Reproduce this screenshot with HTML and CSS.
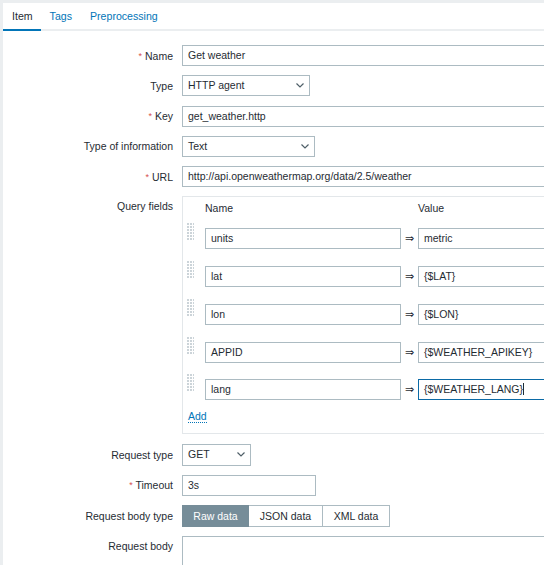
FILE: index.html
```html
<!doctype html>
<html lang="en">
  <head>
    <meta charset="UTF-8" />
    <title>Item</title>
    <link rel="stylesheet" href="styles.css">
  </head>
  <body>
    <div class="panel">
      <ul class="tabs">
        <li class="tab active">Item</li>
        <li class="tab">Tags</li>
        <li class="tab">Preprocessing</li>
      </ul>

      <div class="form">
        <label class="label"><span class="req">*</span> Name</label>
        <div class="field"><div class="input wide">Get weather</div></div>

        <label class="label">Type</label>
        <div class="field">
          <div class="select type-select">HTTP agent
            <svg class="chev" width="8" height="5" viewBox="0 0 8 5"><polyline points="0.5,0.5 4,4 7.5,0.5" /></svg>
          </div>
        </div>

        <label class="label"><span class="req">*</span> Key</label>
        <div class="field"><div class="input wide">get_weather.http</div></div>

        <label class="label">Type of information</label>
        <div class="field">
          <div class="select info-select">Text
            <svg class="chev" width="8" height="5" viewBox="0 0 8 5"><polyline points="0.5,0.5 4,4 7.5,0.5" /></svg>
          </div>
        </div>

        <label class="label"><span class="req">*</span> URL</label>
        <div class="field"><div class="input wide">http://api.openweathermap.org/data/2.5/weather</div></div>

        <label class="label label-top">Query fields</label>
        <div class="field">
          <div class="query-box">
            <div class="query-head">
              <span></span>
              <span>Name</span>
              <span></span>
              <span>Value</span>
            </div>
            <div class="query-row">
              <div class="drag"></div>
              <div class="input">units</div>
              <div class="arrow">&rArr;</div>
              <div class="input">metric</div>
            </div>
            <div class="query-row">
              <div class="drag"></div>
              <div class="input">lat</div>
              <div class="arrow">&rArr;</div>
              <div class="input">{$LAT}</div>
            </div>
            <div class="query-row">
              <div class="drag"></div>
              <div class="input">lon</div>
              <div class="arrow">&rArr;</div>
              <div class="input">{$LON}</div>
            </div>
            <div class="query-row">
              <div class="drag"></div>
              <div class="input">APPID</div>
              <div class="arrow">&rArr;</div>
              <div class="input">{$WEATHER_APIKEY}</div>
            </div>
            <div class="query-row">
              <div class="drag"></div>
              <div class="input">lang</div>
              <div class="arrow">&rArr;</div>
              <div class="input focused">{$WEATHER_LANG}<span class="caret"></span></div>
            </div>
            <a class="add-link">Add</a>
          </div>
        </div>

        <label class="label">Request type</label>
        <div class="field">
          <div class="select method-select">GET
            <svg class="chev" width="8" height="5" viewBox="0 0 8 5"><polyline points="0.5,0.5 4,4 7.5,0.5" /></svg>
          </div>
        </div>

        <label class="label"><span class="req">*</span> Timeout</label>
        <div class="field"><div class="input timeout">3s</div></div>

        <label class="label">Request body type</label>
        <div class="field">
          <div class="segmented">
            <span class="seg active">Raw data</span>
            <span class="seg">JSON data</span>
            <span class="seg">XML data</span>
          </div>
        </div>

        <label class="label label-top">Request body</label>
        <div class="field"><div class="textarea"></div></div>
      </div>
    </div>
  </body>
</html>
```

FILE: styles.css
```css
:root {
  --text-color: #1f2c33;
  --link-color: #0275b8;
  --border-color: #acbbc2;
  --soft-border: #e3e7ea;
  --bg-color: #ebeef0;
  --req-color: #d64e4e;
}

* {
  margin: 0;
  padding: 0;
  box-sizing: border-box;
}

body {
  width: 544px;
  height: 565px;
  overflow: hidden;
  background-color: var(--bg-color);
  font-family: 'Liberation Sans', Arial, sans-serif;
  font-size: 10.5px;
  color: var(--text-color);
}

.panel {
  margin: 3px 0 0 3px;
  width: 541px;
  height: 562px;
  overflow: hidden;
  background-color: #ffffff;
}

.tabs {
  display: flex;
  list-style: none;
  height: 28px;
  border-bottom: 2px solid var(--bg-color);
}

.tab {
  padding: 0 9px;
  line-height: 26px;
  color: var(--link-color);
  font-size: 10.6px;
}

.tab:first-child {
  padding: 0 8px 0 9px;
}

.tab.active {
  color: var(--text-color);
  border-bottom: 2px solid var(--link-color);
  height: 28px;
}

.form {
  display: grid;
  grid-template-columns: 170px 1fr;
  column-gap: 9px;
  row-gap: 9.25px;
  padding-top: 14px;
}

.label {
  text-align: right;
  align-self: center;
  white-space: nowrap;
}

.label-top {
  align-self: start;
  padding-top: 4px;
}

.req {
  color: var(--req-color);
  font-size: 9px;
  vertical-align: 1px;
}

.field {
  display: flex;
  min-width: 0;
}

.input,
.select,
.textarea {
  flex-shrink: 0;
  height: 21px;
  border: 1px solid var(--border-color);
  background-color: #ffffff;
  padding: 0 5px;
  line-height: 19px;
  white-space: nowrap;
  overflow: hidden;
}

.wide {
  width: 400px;
}

.select {
  display: flex;
  align-items: center;
  justify-content: space-between;
  padding-right: 4px;
}

.chev {
  fill: none;
  stroke: #4f5f68;
  stroke-width: 1.2;
  margin-right: 1px;
}

.type-select {
  width: 128px;
}

.info-select {
  width: 133px;
}

.method-select {
  width: 69px;
  height: 22px;
}

.timeout {
  width: 134px;
}

.query-box {
  flex-shrink: 0;
  width: 420px;
  border: 1px solid var(--soft-border);
  border-right: none;
  padding: 5px 0 10px 3px;
}

.query-head,
.query-row {
  display: grid;
  grid-template-columns: 19px 196px 17px 1fr;
}

.query-head {
  line-height: 12px;
  margin-bottom: 8px;
}

.query-row {
  height: 27px;
  margin-bottom: 10.75px;
}

.query-row:last-of-type {
  margin-bottom: 10px;
}

.query-row .input {
  margin-top: 6px;
}

.drag {
  width: 7px;
  height: 18px;
  background-image: radial-gradient(circle at 1px 1px, #ccd4d9 1px, transparent 1.1px);
  background-size: 3px 3px;
  margin: 1px 0 0 1px;
}

.arrow {
  margin-top: 6px;
  line-height: 21px;
  text-align: center;
  font-family: 'DejaVu Sans', sans-serif;
  font-size: 11px;
}

.focused {
  border-color: #0b6aa6;
}

.caret {
  display: inline-block;
  width: 1px;
  height: 12px;
  background-color: var(--text-color);
  vertical-align: -2px;
}

.add-link {
  display: inline-block;
  margin-left: 2px;
  line-height: 12px;
  color: var(--link-color);
  border-bottom: 1px dotted var(--link-color);
}

.segmented {
  display: flex;
  height: 22px;
}

.seg {
  border: 1px solid var(--border-color);
  line-height: 20px;
  text-align: center;
  background-color: #ffffff;
}

.seg:nth-child(1) {
  width: 67px;
}

.seg:nth-child(2) {
  width: 74px;
  border-left: none;
}

.seg:nth-child(3) {
  width: 67px;
  border-left: none;
}

.seg.active {
  background-color: #768d99;
  border-color: #768d99;
  color: #ffffff;
}

.textarea {
  width: 400px;
  height: 80px;
}
```
